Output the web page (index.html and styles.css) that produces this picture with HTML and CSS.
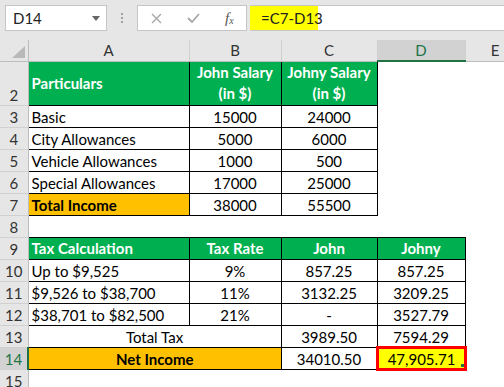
FILE: index.html
```html
<!DOCTYPE html>
<html>
<head>
<meta charset="utf-8">
<link rel="stylesheet" href="styles.css">
</head>
<body>
<div class="toolbar">
  <div class="namebox">
    <span>D14</span>
    <svg class="dd" width="8" height="5" viewBox="0 0 8 5"><path d="M0 0H8L4 5Z" fill="#666"/></svg>
  </div>
  <div class="grip"><i></i><i></i><i></i></div>
  <div class="fbtns">
    <svg class="ic-x" width="11" height="11" viewBox="0 0 11 11"><path d="M1 1L10 10M10 1L1 10" stroke="#a8a8a8" stroke-width="1.4" fill="none"/></svg>
    <svg class="ic-ok" width="13" height="10" viewBox="0 0 13 10"><path d="M1 5L5 9L12 1" stroke="#a8a8a8" stroke-width="1.8" fill="none"/></svg>
    <span class="fx">f<sub>x</sub></span>
  </div>
  <div class="formula"><span class="fhl">=C7-D13</span></div>
</div>
<table class="sheet">
  <colgroup>
    <col class="c-rh"><col class="c-a"><col class="c-b"><col class="c-c"><col class="c-d"><col class="c-e">
  </colgroup>
  <tr class="colhdr">
    <th class="corner"><span class="tri"></span></th><th>A</th><th>B</th><th>C</th><th class="sel">D</th><th>E</th>
  </tr>
  <tr class="tall">
    <th class="rh">2</th>
    <td class="b g l">Particulars</td>
    <td class="b g">John Salary<br>(in $)</td>
    <td class="b g">Johny Salary<br>(in $)</td>
    <td></td><td></td>
  </tr>
  <tr><th class="rh">3</th><td class="b l">Basic</td><td class="b">15000</td><td class="b">24000</td><td></td><td></td></tr>
  <tr><th class="rh">4</th><td class="b l">City Allowances</td><td class="b">5000</td><td class="b">6000</td><td></td><td></td></tr>
  <tr><th class="rh">5</th><td class="b l">Vehicle Allowances</td><td class="b">1000</td><td class="b">500</td><td></td><td></td></tr>
  <tr><th class="rh">6</th><td class="b l">Special Allowances</td><td class="b">17000</td><td class="b">25000</td><td></td><td></td></tr>
  <tr><th class="rh">7</th><td class="b l o">Total Income</td><td class="b">38000</td><td class="b">55500</td><td></td><td></td></tr>
  <tr><th class="rh">8</th><td></td><td></td><td></td><td></td><td></td></tr>
  <tr><th class="rh">9</th><td class="b g l">Tax Calculation</td><td class="b g">Tax Rate</td><td class="b g">John</td><td class="b g">Johny</td><td></td></tr>
  <tr><th class="rh">10</th><td class="b l">Up to $9,525</td><td class="b">9%</td><td class="b">857.25</td><td class="b">857.25</td><td></td></tr>
  <tr><th class="rh">11</th><td class="b l">$9,526 to $38,700</td><td class="b">11%</td><td class="b">3132.25</td><td class="b">3209.25</td><td></td></tr>
  <tr><th class="rh">12</th><td class="b l">$38,701 to $82,500</td><td class="b">21%</td><td class="b">-</td><td class="b">3527.79</td><td></td></tr>
  <tr><th class="rh">13</th><td colspan="2" class="tt">Total Tax</td><td class="b">3989.50</td><td class="b">7594.29</td><td></td></tr>
  <tr><th class="rh sel">14</th><td colspan="2" class="b o tb">Net Income</td><td class="b">34010.50</td><td class="b y r"><span class="frame"><span class="handle"></span></span>47,905.71</td><td></td></tr>
  <tr><th class="rh">15</th><td></td><td></td><td></td><td></td><td></td></tr>
</table>
</body>
</html>
```
FILE: styles.css
```css
html, body {
  margin: 0;
  padding: 0;
  background: #ffffff;
  overflow: hidden;
  width: 504px;
  height: 387px;
}

body {
  font-family: Lato, "Open Sans", sans-serif;
  color: #000;
}

.toolbar {
  display: flex;
  align-items: flex-start;
  height: 40px;
  padding-top: 5px;
  box-sizing: border-box;
  background: #e6e6e6;
}

.namebox {
  margin-left: 5px;
  width: 102px;
  height: 26px;
  box-sizing: border-box;
  background: #fff;
  border: 1px solid #c6c6c6;
  display: flex;
  align-items: center;
  justify-content: space-between;
  padding: 0 6px 0 7px;
  font-size: 15px;
  color: #222;
}

.grip {
  width: 30px;
  height: 26px;
  display: flex;
  flex-direction: column;
  align-items: center;
  justify-content: center;
  gap: 2px;
}

.grip i {
  display: block;
  width: 2px;
  height: 2px;
  background: #a0a0a0;
}

.fbtns {
  width: 110px;
  height: 26px;
  box-sizing: border-box;
  background: #fff;
  border: 1px solid #c6c6c6;
  display: flex;
  align-items: center;
  padding-left: 13px;
}

.ic-ok {
  margin-left: 25px;
}

.fx {
  margin-left: 25px;
  font-family: "Liberation Serif", serif;
  font-style: italic;
  font-size: 15px;
  color: #555;
}

.fx sub {
  font-size: 10px;
  vertical-align: -1px;
}

.formula {
  margin-left: 3px;
  flex: 1;
  height: 26px;
  box-sizing: border-box;
  background: #fff;
  border-top: 1px solid #c6c6c6;
  border-bottom: 1px solid #c6c6c6;
  display: flex;
}

.fhl {
  width: 68px;
  box-sizing: border-box;
  padding-left: 11px;
  background: #ffff00;
  font-size: 15px;
  line-height: 24px;
  white-space: nowrap;
  color: #222;
}

.sheet {
  border-collapse: collapse;
  table-layout: fixed;
  width: 525px;
}

.c-rh { width: 28px; }
.c-a { width: 161px; }
.c-b { width: 92px; }
.c-c { width: 96px; }
.c-d { width: 88px; }
.c-e { width: 60px; }

.sheet tr {
  height: 22px;
}

.sheet tr.colhdr {
  height: 21px;
}

.sheet tr.tall {
  height: 44px;
}

.sheet th,
.sheet td {
  padding: 0;
  font-size: 15px;
  line-height: 20px;
  white-space: nowrap;
  overflow: hidden;
}

.colhdr th {
  background: #e6e6e6;
  font-weight: normal;
  color: #333;
  border-right: 1px solid #d0d0d0;
  border-bottom: 1px solid #bdbdbd;
  vertical-align: middle;
  text-align: center;
}

.colhdr th.corner {
  position: relative;
  border-right: 1px solid #bdbdbd;
}

.tri {
  position: absolute;
  right: 3px;
  bottom: 3px;
  width: 0;
  height: 0;
  border-left: 13px solid transparent;
  border-bottom: 12px solid #b9b9b9;
}

.colhdr th.sel {
  background: #d2d2d2;
  color: #217346;
  border-bottom: 2px solid #217346;
}

th.rh {
  background: #e6e6e6;
  font-weight: normal;
  color: #333;
  text-align: center;
  vertical-align: bottom;
  border-right: 1px solid #bdbdbd;
  border-bottom: 1px solid #d0d0d0;
}

th.rh.sel {
  background: #d2d2d2;
  color: #217346;
  border-right: 2px solid #217346;
}

.sheet td {
  text-align: center;
  vertical-align: bottom;
}

.sheet td.b {
  border: 1px solid #000;
}

.sheet td.l {
  text-align: left;
  padding-left: 3px;
}

.sheet td.g {
  background: #00b050;
  color: #fff;
  font-weight: bold;
  vertical-align: middle;
  line-height: 20px;
}

.sheet tr.tall td.g {
  line-height: 21px;
}

.sheet td.o {
  background: #ffc000;
  font-weight: bold;
}

.sheet td.y {
  background: #ffff00;
}

.sheet td.r {
  text-align: right;
  padding-right: 9px;
  position: relative;
  overflow: visible;
}

.frame {
  position: absolute;
  left: -2px;
  top: -2px;
  right: -2px;
  bottom: -2px;
  border: 3px solid #ff0000;
}

.handle {
  position: absolute;
  right: 0;
  bottom: 1px;
  width: 3px;
  height: 3px;
  background: #217346;
}
```
